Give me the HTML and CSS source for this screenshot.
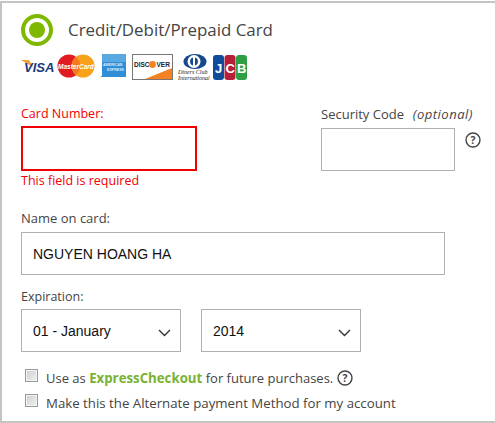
FILE: index.html
```html
<!DOCTYPE html>
<html>
<head>
    <meta charset="utf-8">
    <title>Payment</title>
    <link rel="stylesheet" href="styles.css">
</head>
<body>
    <div class="panel">
        <div class="method">
            <span class="radio"><span class="radio-dot"></span></span>
            <span class="method-title">Credit/Debit/Prepaid Card</span>
        </div>

        <div class="logos">
            <svg class="logo" width="37" height="24" viewBox="0 0 37 24">
                <rect width="37" height="24" fill="#fff"/>
                <polygon points="0,6 8,6 12,13" fill="#f0a030"/>
                <text x="3" y="17.500" class="visa-text">VISA</text>
            </svg>
            <svg class="logo logo-mc" width="38" height="24" viewBox="0 0 38 24">
                <circle cx="12" cy="12" r="11.500" fill="#e01b22"/>
                <circle cx="26" cy="12" r="11.500" fill="#f9a11b"/>
                <path d="M19 3a11.500 11.500 0 0 1 0 18a11.500 11.500 0 0 1 0-18z" fill="#f47a20"/>
                <text x="1" y="14.500" class="mc-text">MasterCard</text>
            </svg>
            <svg class="logo logo-amex" width="25" height="24" viewBox="0 0 25 24">
                <rect x="1" y="0" width="24" height="23" fill="#2f8fd6"/>
                <rect x="1" y="0" width="24" height="8" fill="#5aa8e2"/>
                <text x="2" y="11.500" class="amex-text">AMERICAN</text>
                <text x="6" y="16.500" class="amex-text">EXPRESS</text>
                <rect x="0" y="22" width="1" height="1" fill="#2f8fd6"/>
            </svg>
            <svg class="logo logo-discover" width="41" height="26" viewBox="0 0 41 26">
                <rect x="0.500" y="0.500" width="40" height="25" fill="#fff" stroke="#777"/>
                <polygon points="40,14 40,25 13,25" fill="#f58220"/>
                <text x="2" y="13" class="discover-text">DISC</text>
                <circle cx="20.500" cy="10.500" r="3.400" fill="#f58220"/>
                <text x="24.500" y="13" class="discover-text">VER</text>
            </svg>
            <svg class="logo logo-diners" width="34" height="27" viewBox="0 0 34 27">
                <ellipse cx="17" cy="7.500" rx="11.500" ry="7.500" fill="#17488c"/>
                <circle cx="16" cy="7.500" r="6.500" fill="#fff"/>
                <path d="M15 3.500a4.200 4.200 0 0 0 0 8zM17 3.500a4.200 4.200 0 0 1 0 8z" fill="#17488c"/>
                <text x="0" y="20" class="diners-text">Diners Club</text>
                <text x="0" y="26" class="diners-text">International</text>
            </svg>
            <svg class="logo logo-jcb" width="34" height="26" viewBox="0 0 34 26">
                <rect x="0" y="0" width="11" height="25" rx="3" fill="#0f4c9b"/>
                <rect x="11.500" y="0" width="11" height="25" rx="3" fill="#b51f38"/>
                <rect x="23" y="0" width="11" height="25" rx="3" fill="#2f9e44"/>
                <text x="2" y="18" class="jcb-text">J</text>
                <text x="12.500" y="18" class="jcb-text">C</text>
                <text x="24" y="18" class="jcb-text">B</text>
            </svg>
        </div>

        <div class="card-row">
            <div class="card-number">
                <label class="field-label error-text">Card Number:</label>
                <input type="text" class="field field-error">
                <div class="error-text error-msg">This field is required</div>
            </div>
            <div class="security">
                <label class="field-label security-label">Security Code &nbsp;<em>(optional)</em></label>
                <div class="security-input">
                    <input type="text" class="field field-code">
                    <svg class="help help-code" width="16" height="16" viewBox="0 0 17 17">
                        <circle cx="8.500" cy="8.500" r="7.400" fill="none" stroke="#444" stroke-width="1.500"/>
                        <text x="8.500" y="12.500" class="help-text">?</text>
                    </svg>
                </div>
            </div>
        </div>

        <label class="field-label name-label">Name on card:</label>
        <input type="text" class="field field-name" value="NGUYEN HOANG HA">

        <label class="field-label exp-label">Expiration:</label>
        <div class="exp-row">
            <div class="select-box">
                <select class="field field-select"><option>01 - January</option></select>
                <svg class="chevron" width="13" height="8" viewBox="0 0 13 8"><path d="M1 1l5.500 5.500L12 1" fill="none" stroke="#333" stroke-width="1.400"/></svg>
            </div>
            <div class="select-box">
                <select class="field field-select"><option>2014</option></select>
                <svg class="chevron" width="13" height="8" viewBox="0 0 13 8"><path d="M1 1l5.500 5.500L12 1" fill="none" stroke="#333" stroke-width="1.400"/></svg>
            </div>
        </div>

        <div class="check-row check-first">
            <input type="checkbox" class="check">
            <span>Use as <b class="express">ExpressCheckout</b> for future purchases.</span>
            <svg class="help help-express" width="16" height="16" viewBox="0 0 17 17">
                <circle cx="8.500" cy="8.500" r="7.400" fill="none" stroke="#444" stroke-width="1.500"/>
                <text x="8.500" y="12.500" class="help-text">?</text>
            </svg>
        </div>
        <div class="check-row check-second">
            <input type="checkbox" class="check">
            <span>Make this the Alternate payment Method for my account</span>
        </div>
    </div>
</body>
</html>
```

FILE: styles.css
```css
html, body {
    margin: 0;
    padding: 0;
    background-color: #fff;
}
body {
    font-family: "Open Sans", "Noto Sans", sans-serif;
    font-size: 12.5px;
    color: #444;
}
.panel {
    box-sizing: border-box;
    width: 495px;
    height: 422px;
    margin-top: 1px;
    border-top: 2px solid #c4c4c4;
    border-left: 2px solid #c4c4c4;
    border-bottom: 2px solid #c4c4c4;
    padding: 10px 0 0 19px;
}
.method {
    display: flex;
    align-items: center;
    height: 33px;
}
.radio {
    box-sizing: border-box;
    width: 32px;
    height: 32px;
    border: 4px solid #7fb800;
    border-radius: 50%;
    display: flex;
    align-items: center;
    justify-content: center;
}
.radio-dot {
    width: 16px;
    height: 16px;
    border-radius: 50%;
    background-color: #7fb800;
}
.method-title {
    margin-left: 15px;
    font-size: 16.9px;
    color: #444;
}
.logos {
    display: flex;
    align-items: flex-start;
    margin-top: 8px;
    height: 26px;
}
.logo {
    display: block;
}
.logo-mc {
    margin-left: -1px;
}
.logo-amex {
    margin-left: 6px;
}
.logo-discover {
    margin-left: 6px;
}
.logo-diners {
    margin-left: 5px;
}
.logo-jcb {
    margin-left: 1px;
    margin-top: 1px;
}
.visa-text {
    font: italic bold 13px "Liberation Sans", sans-serif;
    fill: #1a3a7c;
}
.mc-text {
    font: italic bold 6.500px "Liberation Sans", sans-serif;
    fill: #fff;
}
.amex-text {
    font: bold 3.600px "Liberation Sans", sans-serif;
    fill: #d8ecfa;
}
.discover-text {
    font: bold 6.500px "Liberation Sans", sans-serif;
    fill: #222;
}
.diners-text {
    font: italic 6px "Liberation Serif", serif;
    fill: #222;
}
.jcb-text {
    font: bold 13px "Liberation Sans", sans-serif;
    fill: #fff;
}
.card-row {
    display: flex;
    margin-top: 25px;
}
.card-number {
    width: 300px;
}
.field-label {
    display: block;
    line-height: 17px;
}
.field {
    box-sizing: border-box;
    display: block;
    margin: 0;
    background-color: #fff;
    border: 1px solid #b0b0b0;
    border-radius: 0;
    outline: none;
    font-family: "Liberation Sans", sans-serif;
    font-size: 14px;
    color: #111;
    padding: 0 11px;
}
.field-error {
    width: 176px;
    height: 45px;
    margin-top: 4px;
    border: 2px solid #f00000;
}
.error-text {
    color: #f00000;
}
.error-msg {
    line-height: 17px;
    margin-top: 1px;
}
.security {
    padding-top: 1px;
}
.security-label {
    font-size: 13px;
}
.security em {
    margin-left: 2px;
    letter-spacing: 0.5px;
}
.security-input {
    display: flex;
    align-items: flex-start;
    margin-top: 5px;
}
.field-code {
    width: 134px;
    height: 43px;
}
.help {
    display: block;
}
.help-code {
    margin: 4px 0 0 10px;
}
.help-text {
    font: bold 11px "Open Sans", sans-serif;
    fill: #444;
    text-anchor: middle;
}
.name-label {
    margin-top: 21px;
    font-size: 13px;
}
.field-name {
    width: 424px;
    height: 43px;
    margin-top: 5px;
}
.exp-label {
    margin-top: 13px;
}
.exp-row {
    display: flex;
    gap: 20px;
    margin-top: 4px;
}
.select-box {
    position: relative;
    width: 160px;
    height: 43px;
}
.field-select {
    width: 100%;
    height: 100%;
    appearance: none;
    -webkit-appearance: none;
}
.chevron {
    position: absolute;
    right: 10px;
    top: 20px;
}
.check-row {
    display: flex;
    align-items: center;
    height: 25px;
    padding-left: 4px;
}
.check-first {
    margin-top: 13px;
    font-size: 13px;
}
.check-second {
    font-size: 13.25px;
}
.check {
    appearance: none;
    -webkit-appearance: none;
    box-sizing: border-box;
    width: 13px;
    height: 13px;
    margin: 0 8px 4px 0;
    border: 1px solid #999;
    background: linear-gradient(135deg, #cfcfcf, #f0f0f0);
    box-shadow: inset 0 0 0 1px #f4f4f4;
}
.express {
    color: #7ab233;
    font-size: 13.25px;
    font-weight: 700;
}
.help-express {
    margin-left: 4px;
}
```
